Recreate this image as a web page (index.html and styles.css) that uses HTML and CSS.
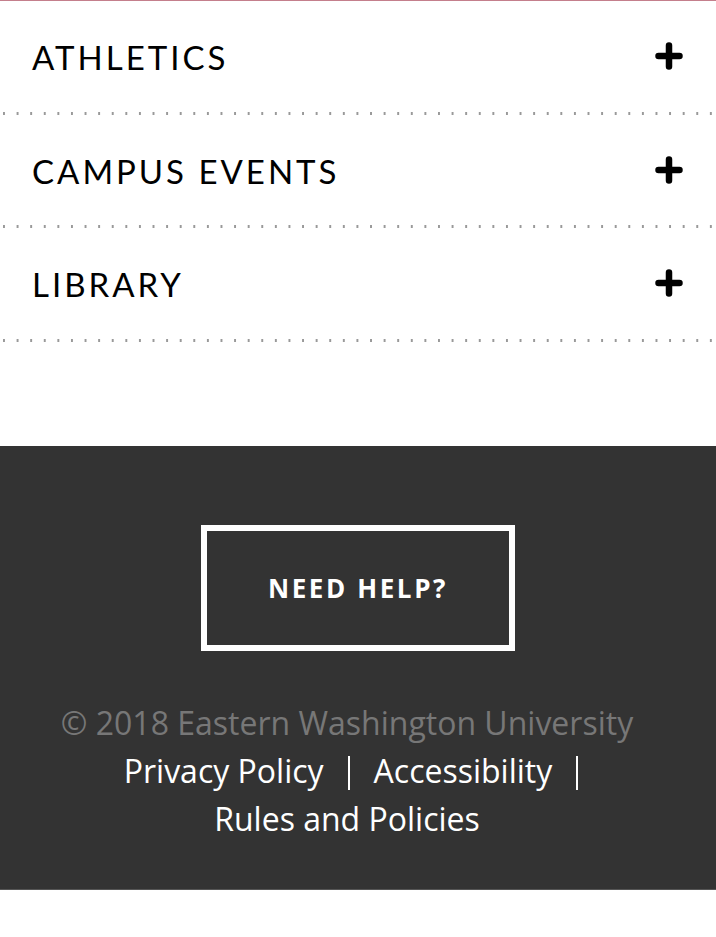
FILE: index.html
```html
<!DOCTYPE html>
<html lang="en">
<head>
<meta charset="utf-8">
<title>EWU</title>
<link rel="stylesheet" href="styles.css">
</head>
<body>
<div class="page">
  <ul class="accordion">
    <li class="acc-item">
      <span class="acc-title">ATHLETICS</span>
      <svg class="plus" viewBox="0 0 28 28" width="28" height="28" aria-hidden="true"><path d="M14 3.5V24.5M3.5 14H24.5" stroke="#000" stroke-width="6.5" stroke-linecap="round"/></svg>
    </li>
    <li class="acc-item">
      <span class="acc-title">CAMPUS EVENTS</span>
      <svg class="plus" viewBox="0 0 28 28" width="28" height="28" aria-hidden="true"><path d="M14 3.5V24.5M3.5 14H24.5" stroke="#000" stroke-width="6.5" stroke-linecap="round"/></svg>
    </li>
    <li class="acc-item">
      <span class="acc-title">LIBRARY</span>
      <svg class="plus" viewBox="0 0 28 28" width="28" height="28" aria-hidden="true"><path d="M14 3.5V24.5M3.5 14H24.5" stroke="#000" stroke-width="6.5" stroke-linecap="round"/></svg>
    </li>
  </ul>
  <footer class="footer">
    <a class="help-btn" href="#">NEED HELP?</a>
    <div class="legal">
      <p class="copyright">© 2018 Eastern Washington University</p>
      <p class="links"><a class="first-link" href="#">Privacy Policy</a><span class="sep"></span><a href="#">Accessibility</a><span class="sep"></span><br><a href="#">Rules and Policies</a></p>
    </div>
  </footer>
</div>
</body>
</html>
```
FILE: styles.css
```css
html, body {
  margin: 0;
  padding: 0;
  background: #fff;
}
.page {
  border-top: 1px solid #c47f8c;
}
.accordion {
  list-style: none;
  margin: 0;
  padding: 0;
}
.acc-item {
  display: flex;
  align-items: center;
  justify-content: space-between;
  height: 110.5px;
  padding: 0 33px 3px 32px;
  background-image: linear-gradient(to right, #999 0 2px, transparent 2px 100%);
  background-size: 13.6px 3px;
  background-repeat: repeat-x;
  background-position: 3px 100%;
}
.acc-title {
  font-family: Lato, "Noto Sans", sans-serif;
  font-size: 33px;
  letter-spacing: 3px;
  color: #000;
  line-height: 1;
  padding-top: 3px;
}
.plus {
  display: block;
}
.footer {
  margin-top: 104.5px;
  background: #333;
  border-bottom: 1px solid #555;
  padding: 79px 0 0;
  height: 364px;
  display: flex;
  flex-direction: column;
  align-items: center;
  font-family: "Open Sans", sans-serif;
}
.help-btn {
  box-sizing: border-box;
  width: 314px;
  height: 126px;
  border: 6px solid #fff;
  display: flex;
  align-items: center;
  justify-content: center;
  color: #fff;
  text-decoration: none;
  font-weight: 700;
  font-size: 26px;
  letter-spacing: 2.6px;
}
.legal {
  margin-top: 48px;
  width: 100%;
  box-sizing: border-box;
  padding: 0 22px 0 0;
  text-align: center;
  font-size: 32px;
  line-height: 48px;
}
.legal p {
  margin: 0;
}
.copyright {
  color: #777;
}
.links a {
  color: #fff;
  text-decoration: none;
}
.links .first-link {
  margin-left: 32px;
}
.sep {
  display: inline-block;
  width: 2px;
  height: 34px;
  background: #fff;
  margin: 0 24px;
  vertical-align: -7px;
}
```
